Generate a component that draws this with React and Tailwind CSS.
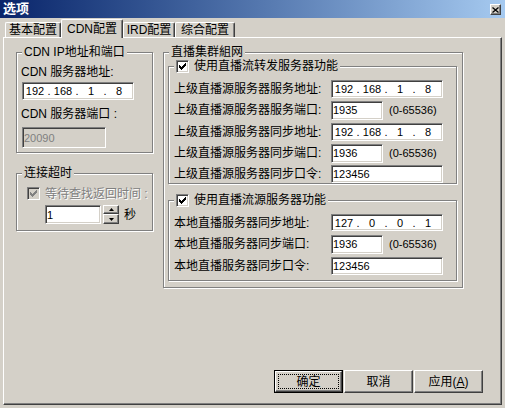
import { Fragment } from 'react';

// sunken 3D edge used by the edit boxes
const sunken =
  'border border-t-[#808080] border-l-[#808080] border-b-white border-r-white shadow-[inset_1px_1px_0_#404040,inset_-1px_-1px_0_#d4d0c8]';
const raised =
  'border border-t-white border-l-white border-r-[#404040] border-b-[#404040] shadow-[inset_-1px_-1px_0_#808080]';

const checkPixels = [
  [6, 0, 1], [5, 1, 2], [0, 2, 1], [4, 2, 3], [0, 3, 2], [3, 3, 3], [0, 4, 5], [1, 5, 3], [2, 6, 1],
];

function Check({ disabled }) {
  return (
    <div
      className={`w-[13px] h-[13px] shrink-0 flex items-center justify-center ${sunken} ${
        disabled ? 'bg-[#d4d0c8]' : 'bg-white'
      }`}
    >
      <svg width="7" height="7" viewBox="0 0 7 7" shapeRendering="crispEdges">
        {checkPixels.map(([x, y, w], i) => (
          <rect key={i} x={x} y={y} width={w} height="1" fill={disabled ? '#808080' : '#000'} />
        ))}
      </svg>
    </div>
  );
}

function Group({ title, className = '', children }) {
  return (
    <div className={`relative border border-[#808080] shadow-[inset_1px_1px_0_#fff,1px_1px_0_#fff] ${className}`}>
      <div className="absolute left-[5px] -top-[8px] h-[14px] px-[2px] bg-[#d4d0c8] flex items-center gap-[5px] whitespace-nowrap">
        {title}
      </div>
      {children}
    </div>
  );
}

function IpBox({ parts, className = '' }) {
  return (
    <div className={`bg-white flex items-center pl-[1px] text-[11px] ${sunken} ${className}`}>
      {parts.map((p, i) => (
        <Fragment key={i}>
          {i > 0 && <span className="w-[6px] text-center">.</span>}
          <span className="w-[22px] text-center">{p}</span>
        </Fragment>
      ))}
    </div>
  );
}

function Edit({ value, className = '' }) {
  return (
    <div className={`bg-white flex items-center pl-[1px] text-[11px] ${sunken} ${className}`}>{value}</div>
  );
}

function Row({ label, h, children }) {
  return (
    <div className={`flex items-center ${h}`}>
      <div className="w-[157px] shrink-0 whitespace-nowrap">{label}</div>
      {children}
    </div>
  );
}

function Range() {
  return <span className="ml-[6px] text-[11px]">(0-65536)</span>;
}

function Tab({ w, children }) {
  return (
    <div
      className={`${w} h-[15px] flex items-center justify-center border border-b-0 border-white border-r-[#404040] shadow-[inset_-1px_0_0_#808080] rounded-t-[2px] whitespace-nowrap`}
    >
      {children}
    </div>
  );
}

function Btn({ def, children }) {
  if (def) {
    return (
      <div className="w-[69px] h-[23px] border border-black">
        <div className={`h-full p-[2px] ${raised}`}>
          <div className="w-full h-full border border-dotted border-black flex items-center justify-center">
            {children}
          </div>
        </div>
      </div>
    );
  }
  return (
    <div className={`w-[69px] h-[23px] flex items-center justify-center ${raised}`}>{children}</div>
  );
}

export default function App() {
  return (
    <div className="w-[505px] h-[408px] bg-[#d4d0c8] text-black text-[12px] leading-[14px] [font-family:'Liberation_Sans','Noto_Sans_CJK_SC',sans-serif] overflow-hidden">
      {/* title bar */}
      <div className="h-[18px] flex items-start justify-between bg-linear-to-r from-[#0a246a] to-[#a6caf0] pl-[3px] pr-[4px]">
        <span className="text-white font-bold text-[13px] leading-[18px]">选项</span>
        <div className={`mt-[4px] w-[11px] h-[11px] bg-[#d4d0c8] flex items-center justify-center ${raised}`}>
          <svg width="7" height="6" viewBox="0 0 7 6">
            <path d="M0.5 0.5 L6.5 5.5 M6.5 0.5 L0.5 5.5" stroke="#000" strokeWidth="1.3" />
          </svg>
        </div>
      </div>

      {/* tabs */}
      <div className="relative z-10 flex items-end h-[19px] pl-[5px]">
        <Tab w="w-[56px]">基本配置</Tab>
        <div className="w-[62px] h-[19px] -mb-[1px] pb-[1px] bg-[#d4d0c8] flex items-center justify-center border border-b-0 border-white border-r-[#404040] shadow-[inset_-1px_0_0_#808080] rounded-t-[2px]">
          CDN配置
        </div>
        <Tab w="w-[52px]">IRD配置</Tab>
        <Tab w="w-[60px]">综合配置</Tab>
      </div>

      {/* tab page */}
      <div className={`mx-[3px] h-[368px] flex flex-col ${raised}`}>
        <div className="flex pl-[12px] pt-[14px] gap-[10px]">
          {/* left column */}
          <div className="w-[137px] flex flex-col">
            <Group title="CDN IP地址和端口" className="h-[101px] pl-[4px] pt-[12px]">
              <div className="whitespace-nowrap">CDN 服务器地址:</div>
              <IpBox parts={['192', '168', '1', '8']} className="ml-[1px] mt-[3px] w-[112px] h-[18px]" />
              <div className="mt-[7px] whitespace-nowrap">CDN 服务器端口 :</div>
              <div
                className={`ml-[1px] mt-[6px] w-[84px] h-[21px] flex items-center pl-[1px] text-[11px] text-[#808080] bg-[#d4d0c8] ${sunken}`}
              >
                20090
              </div>
            </Group>

            <Group title="连接超时" className="mt-[20px] h-[58px] pl-[10px] pt-[13px]">
              <div className="flex items-center h-[13px] gap-[5px]">
                <Check disabled />
                <span className="text-[#808080] [text-shadow:1px_1px_0_#fff] whitespace-nowrap">等待查找返回时间 :</span>
              </div>
              <div className="flex items-center ml-[18px] mt-[5px]">
                <Edit value="1" className="w-[56px] h-[19px]" />
                <div className="ml-[2px] w-[16px] h-[19px] flex flex-col">
                  <div className={`h-[9px] flex items-center justify-center ${raised}`}>
                    <svg width="5" height="3" viewBox="0 0 5 3">
                      <path d="M2.5 0 L5 3 L0 3 Z" fill="#000" />
                    </svg>
                  </div>
                  <div className={`h-[10px] flex items-center justify-center ${raised}`}>
                    <svg width="5" height="3" viewBox="0 0 5 3">
                      <path d="M0 0 L5 0 L2.5 3 Z" fill="#000" />
                    </svg>
                  </div>
                </div>
                <span className="ml-[5px]">秒</span>
              </div>
            </Group>
          </div>

          {/* right column */}
          <Group title="直播集群組网" className="w-[300px] h-[236px] pl-[4px] pt-[13px]">
            <Group
              title={
                <>
                  <Check />
                  <span>使用直播流转发服务器功能</span>
                </>
              }
              className="w-[289px] h-[118px] pl-[5px] pt-[11px]"
            >
              <Row label="上级直播源服务器服务地址:" h="h-[21px]">
                <IpBox parts={['192', '168', '1', '8']} className="w-[112px] h-[18px]" />
              </Row>
              <Row label="上级直播源服务器服务端口:" h="h-[22px]">
                <Edit value="1935" className="w-[52px] h-[19px]" />
                <Range />
              </Row>
              <Row label="上级直播源服务器同步地址:" h="h-[21px]">
                <IpBox parts={['192', '168', '1', '8']} className="w-[112px] h-[18px]" />
              </Row>
              <Row label="上级直播源服务器同步端口:" h="h-[22px]">
                <Edit value="1936" className="w-[52px] h-[19px]" />
                <Range />
              </Row>
              <Row label="上级直播源服务器同步口令:" h="h-[20px]">
                <Edit value="123456" className="w-[112px] h-[18px]" />
              </Row>
            </Group>

            <Group
              title={
                <>
                  <Check />
                  <span>使用直播流源服务器功能</span>
                </>
              }
              className="mt-[16px] w-[289px] h-[81px] pl-[5px] pt-[11px]"
            >
              <Row label="本地直播服务器同步地址:" h="h-[21px]">
                <IpBox parts={['127', '0', '0', '1']} className="w-[112px] h-[17px]" />
              </Row>
              <Row label="本地直播服务器同步端口:" h="h-[22px]">
                <Edit value="1936" className="w-[52px] h-[19px]" />
                <Range />
              </Row>
              <Row label="本地直播服务器同步口令:" h="h-[21px]">
                <Edit value="123456" className="w-[112px] h-[18px]" />
              </Row>
            </Group>
          </Group>
        </div>

        {/* dialog buttons */}
        <div className="mt-auto flex justify-end gap-[1px] pr-[18px] pb-[11px]">
          <Btn def>确定</Btn>
          <Btn>取消</Btn>
          <Btn>
            <span>
              应用(<span className="underline">A</span>)
            </span>
          </Btn>
        </div>
      </div>
    </div>
  );
}
